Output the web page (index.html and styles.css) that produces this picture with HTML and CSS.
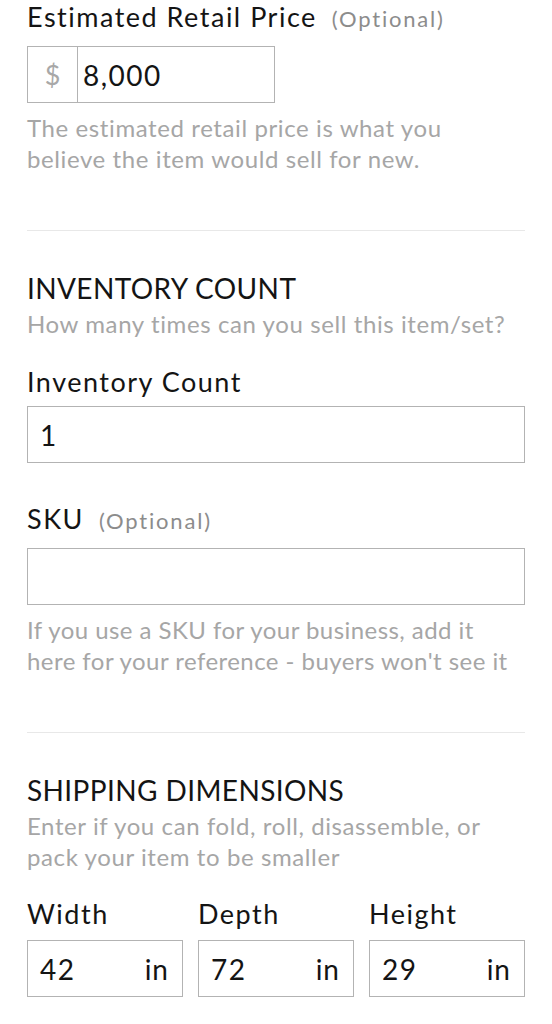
FILE: index.html
```html
<!DOCTYPE html>
<html lang="en">
<head>
<meta charset="utf-8">
<title>Listing details</title>
<link rel="stylesheet" href="styles.css">
</head>
<body>
<main class="form">
  <section class="section section-first">
    <div class="field">
      <label class="label label-opt">Estimated Retail Price<span class="optional">(Optional)</span></label>
      <div class="box price-box">
        <span class="prefix">$</span>
        <span class="value price-value">8,000</span>
      </div>
      <p class="help">The estimated retail price is what you<br>believe the item would sell for new.</p>
    </div>
  </section>

  <hr class="divider">

  <section class="section">
    <h2 class="heading">INVENTORY COUNT</h2>
    <p class="sub">How many times can you sell this item/set?</p>
    <div class="field field-inv">
      <label class="label">Inventory Count</label>
      <div class="box"><span class="value">1</span></div>
    </div>
    <div class="field field-sku">
      <label class="label label-opt">SKU<span class="optional">(Optional)</span></label>
      <div class="box"></div>
      <p class="help help-sku">If you use a SKU for your business, add it<br>here for your reference - buyers won't see it</p>
    </div>
  </section>

  <hr class="divider">

  <section class="section">
    <h2 class="heading">SHIPPING DIMENSIONS</h2>
    <p class="sub">Enter if you can fold, roll, disassemble, or<br>pack your item to be smaller</p>
    <div class="dims">
      <div class="dim">
        <label class="label">Width</label>
        <div class="box dim-box"><span class="value">42</span><span class="unit">in</span></div>
      </div>
      <div class="dim">
        <label class="label">Depth</label>
        <div class="box dim-box"><span class="value">72</span><span class="unit">in</span></div>
      </div>
      <div class="dim">
        <label class="label">Height</label>
        <div class="box dim-box"><span class="value">29</span><span class="unit">in</span></div>
      </div>
    </div>
  </section>
</main>
</body>
</html>
```
FILE: styles.css
```css
* { box-sizing: border-box; }
html, body { margin: 0; padding: 0; background: #ffffff; }
body {
  font-family: "Lato", "Noto Sans", sans-serif;
  color: #141414;
}
.form {
  padding: 0 27px;
}
.section { margin: 0; }

.label {
  display: block;
  font-size: 27px;
  line-height: 34px;
  letter-spacing: 1.5px;
  color: #141414;
  margin-bottom: 7px;
}
.label-opt { margin-bottom: 10px; }
.optional {
  font-size: 22px;
  letter-spacing: 1.8px;
  color: #8c8c8c;
  margin-left: 15px;
}

.box {
  display: flex;
  align-items: center;
  height: 57px;
  border: 1px solid #b3b3b3;
  background: #fff;
  padding: 0 13px 0 12px;
}
.value {
  font-size: 28px;
  letter-spacing: 1.5px;
  color: #141414;
}

.price-box {
  width: 248px;
  padding: 0;
}
.prefix {
  width: 50px;
  height: 100%;
  display: flex;
  align-items: center;
  justify-content: center;
  border-right: 1px solid #b3b3b3;
  font-size: 27px;
  color: #a8a8a8;
}
.price-value {
  padding-left: 5px;
}

.help, .sub {
  margin: 9px 0 0 0;
  font-size: 24px;
  line-height: 31px;
  letter-spacing: 0.6px;
  color: #a6a6a6;
}
.sub { margin-top: 3px; }
.help-sku { letter-spacing: 0.45px; }

.divider {
  border: 0;
  height: 1px;
  background: #e8e8e8;
  margin: 56px 0 0 0;
}

.heading {
  margin: 40px 0 0 0;
  font-size: 28px;
  line-height: 34px;
  letter-spacing: 0.4px;
  font-weight: 400;
  color: #141414;
}

.field-inv { margin-top: 26px; }
.field-sku { margin-top: 39px; }

.dims {
  margin-top: 25px;
  display: grid;
  grid-template-columns: repeat(3, 1fr);
  column-gap: 15px;
}
.dim .label { margin-bottom: 9px; }
.dim-box {
  justify-content: space-between;
  padding: 0 13px 0 12px;
}
.unit {
  font-size: 28px;
  letter-spacing: 1px;
  color: #141414;
}
```
